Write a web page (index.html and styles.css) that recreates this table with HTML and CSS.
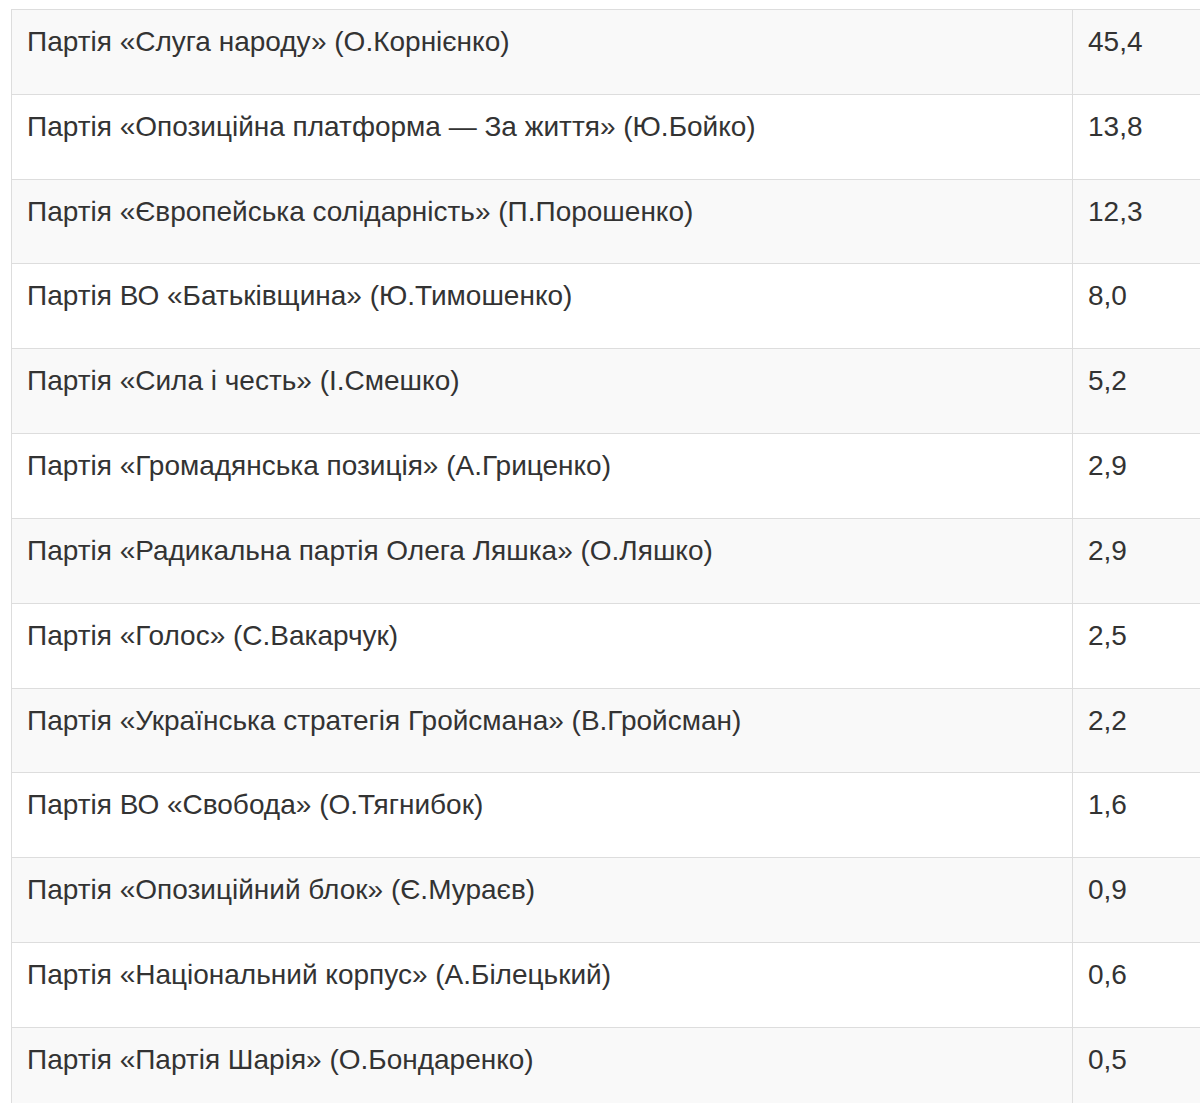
FILE: index.html
```html
<!DOCTYPE html>
<html lang="uk">
<head>
<meta charset="utf-8">
<title>Рейтинг</title>
<link rel="stylesheet" href="styles.css">
</head>
<body>
<div class="wrap">
<table class="rating">
<tbody>
<tr><td class="name">Партія «Слуга народу» (О.Корнієнко)</td><td class="val">45,4</td></tr>
<tr><td class="name">Партія «Опозиційна платформа — За життя» (Ю.Бойко)</td><td class="val">13,8</td></tr>
<tr><td class="name">Партія «Європейська солідарність» (П.Порошенко)</td><td class="val">12,3</td></tr>
<tr><td class="name">Партія ВО «Батьківщина» (Ю.Тимошенко)</td><td class="val">8,0</td></tr>
<tr><td class="name">Партія «Сила і честь» (І.Смешко)</td><td class="val">5,2</td></tr>
<tr><td class="name">Партія «Громадянська позиція» (А.Гриценко)</td><td class="val">2,9</td></tr>
<tr><td class="name">Партія «Радикальна партія Олега Ляшка» (О.Ляшко)</td><td class="val">2,9</td></tr>
<tr><td class="name">Партія «Голос» (С.Вакарчук)</td><td class="val">2,5</td></tr>
<tr><td class="name">Партія «Українська стратегія Гройсмана» (В.Гройсман)</td><td class="val">2,2</td></tr>
<tr><td class="name">Партія ВО «Свобода» (О.Тягнибок)</td><td class="val">1,6</td></tr>
<tr><td class="name">Партія «Опозиційний блок» (Є.Мураєв)</td><td class="val">0,9</td></tr>
<tr><td class="name">Партія «Національний корпус» (А.Білецький)</td><td class="val">0,6</td></tr>
<tr><td class="name">Партія «Партія Шарія» (О.Бондаренко)</td><td class="val">0,5</td></tr>
</tbody>
</table>
</div>
</body>
</html>
```

FILE: styles.css
```css
html, body {
  margin: 0;
  padding: 0;
  background: #fff;
  overflow: hidden;
}
.wrap {
  padding: 9px 0 0 11px;
  overflow: hidden;
}
.rating {
  border-collapse: collapse;
  width: 1260px;
  table-layout: fixed;
  font-family: "Liberation Sans", Arial, sans-serif;
  font-size: 28px;
  color: #333;
  border: 1px solid #ddd;
}
.rating td {
  border: 1px solid #ddd;
  padding: 13px 15px 32.83px 15px;
  line-height: 38px;
  vertical-align: top;
}
.rating tr:nth-child(odd) td {
  background: #f9f9f9;
}
.rating .name {
  width: 1030px;
}
```
